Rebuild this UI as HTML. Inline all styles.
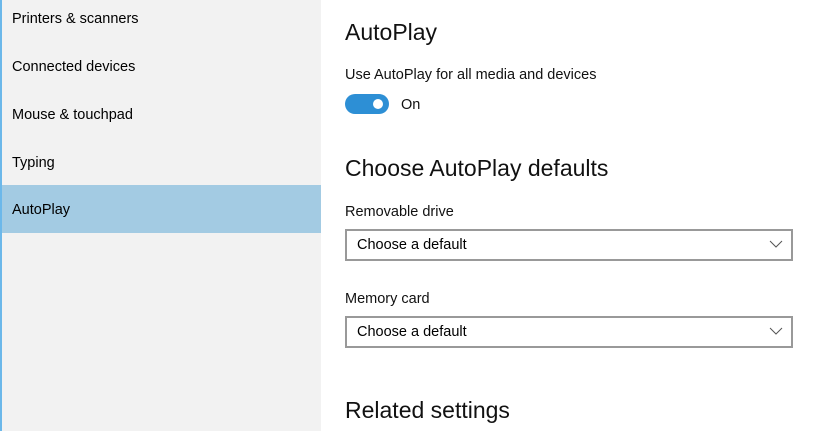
<!DOCTYPE html>
<html><head><style>
*{margin:0;padding:0;box-sizing:border-box}
body{width:820px;height:431px;overflow:hidden;background:#fff;font-family:"Liberation Sans",sans-serif;color:#000;position:relative}
.side{position:absolute;left:0;top:0;width:321px;height:431px;background:#f2f2f2;border-left:2px solid #6cb8ea}
.item{position:absolute;left:0;width:319px;height:48px;font-size:14.5px;padding-left:10px;line-height:50px}
.sel{background:#a3cbe3}
.t{position:absolute;white-space:nowrap}
.h{font-size:23px;color:#111;font-weight:normal}
.s{font-size:14.5px;color:#111}
.dd{position:absolute;left:345px;width:448px;height:32px;border:2px solid #999;font-size:14.5px;padding-left:10px;line-height:28px}
.dd svg{position:absolute;right:8px;top:9px}
.tog{position:absolute;left:345px;top:94px;width:44px;height:20px;border-radius:10px;background:#2d8fd5}
.tog::after{content:"";position:absolute;right:6px;top:5px;width:10px;height:10px;border-radius:50%;background:#fff}
</style></head><body>
<div class="side">
<div class="item" style="top:-6px">Printers &amp; scanners</div>
<div class="item" style="top:42px">Connected devices</div>
<div class="item" style="top:90px">Mouse &amp; touchpad</div>
<div class="item" style="top:138px">Typing</div>
<div class="item sel" style="top:185px">AutoPlay</div>
</div>
<div class="t h" style="left:345px;top:19px">AutoPlay</div>
<div class="t s" style="left:345px;top:67px">Use AutoPlay for all media and devices</div>
<div class="tog"></div>
<div class="t s" style="left:401px;top:97px">On</div>
<div class="t h" style="left:345px;top:155px">Choose AutoPlay defaults</div>
<div class="t s" style="left:345px;top:204px">Removable drive</div>
<div class="dd" style="top:229px">Choose a default<svg width="14" height="8" viewBox="0 0 14 8"><path d="M1 1L7 7L13 1" fill="none" stroke="#555" stroke-width="1"/></svg></div>
<div class="t s" style="left:345px;top:291px">Memory card</div>
<div class="dd" style="top:316px">Choose a default<svg width="14" height="8" viewBox="0 0 14 8"><path d="M1 1L7 7L13 1" fill="none" stroke="#555" stroke-width="1"/></svg></div>
<div class="t h" style="left:345px;top:397px">Related settings</div>
</body></html>
